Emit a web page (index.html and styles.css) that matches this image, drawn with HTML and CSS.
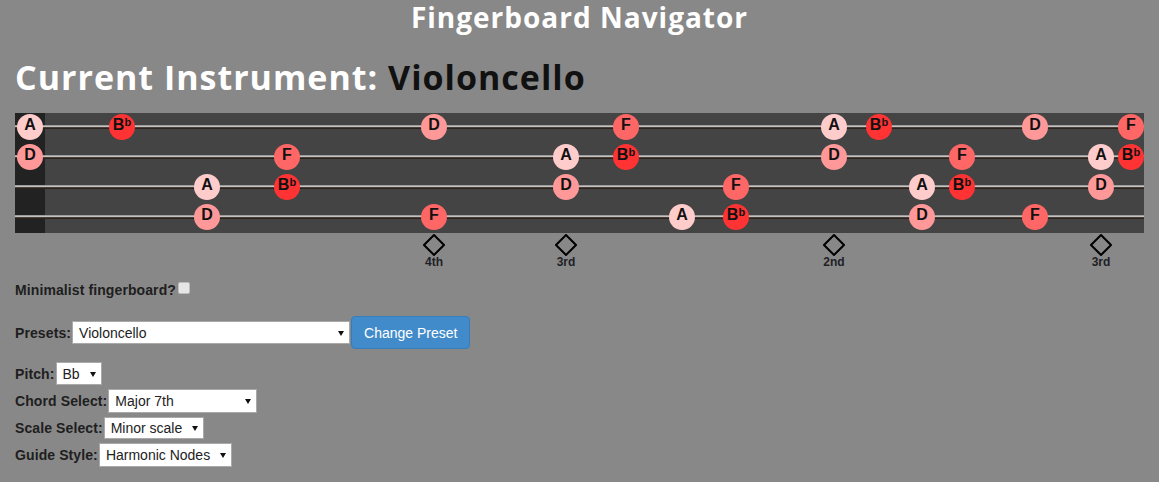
FILE: index.html
```html
<!DOCTYPE html>
<html lang="en">
<head>
<meta charset="utf-8">
<title>Fingerboard Navigator</title>
<link rel="stylesheet" href="styles.css">
</head>
<body>
<h2 class="title">Fingerboard Navigator</h2>
<div class="page">
  <h1 class="instrument">Current Instrument: <span class="inst-name">Violoncello</span></h1>

  <div class="board">
    <div class="nut"></div>
    <div class="string-row">
      <div class="string"></div>
      <span class="note n-a" style="left:2px">A</span>
      <span class="note n-bb" style="left:94px">B<span class="flat">b</span></span>
      <span class="note n-d" style="left:406px">D</span>
      <span class="note n-f" style="left:598px">F</span>
      <span class="note n-a" style="left:806px">A</span>
      <span class="note n-bb" style="left:851px">B<span class="flat">b</span></span>
      <span class="note n-d" style="left:1007px">D</span>
      <span class="note n-f" style="left:1103px">F</span>
    </div>
    <div class="string-row">
      <div class="string"></div>
      <span class="note n-d" style="left:2px">D</span>
      <span class="note n-f" style="left:259px">F</span>
      <span class="note n-a" style="left:538px">A</span>
      <span class="note n-bb" style="left:598px">B<span class="flat">b</span></span>
      <span class="note n-d" style="left:806px">D</span>
      <span class="note n-f" style="left:934px">F</span>
      <span class="note n-a" style="left:1073px">A</span>
      <span class="note n-bb" style="left:1103px">B<span class="flat">b</span></span>
    </div>
    <div class="string-row">
      <div class="string"></div>
      <span class="note n-a" style="left:179px">A</span>
      <span class="note n-bb" style="left:259px">B<span class="flat">b</span></span>
      <span class="note n-d" style="left:538px">D</span>
      <span class="note n-f" style="left:708px">F</span>
      <span class="note n-a" style="left:894px">A</span>
      <span class="note n-bb" style="left:934px">B<span class="flat">b</span></span>
      <span class="note n-d" style="left:1073px">D</span>
    </div>
    <div class="string-row">
      <div class="string"></div>
      <span class="note n-d" style="left:179px">D</span>
      <span class="note n-f" style="left:406px">F</span>
      <span class="note n-a" style="left:654px">A</span>
      <span class="note n-bb" style="left:708px">B<span class="flat">b</span></span>
      <span class="note n-d" style="left:894px">D</span>
      <span class="note n-f" style="left:1007px">F</span>
    </div>
  </div>

  <div class="markers">
    <div class="marker" style="left:399px">
      <svg class="diamond" width="22" height="22" viewBox="0 0 22 22"><polygon points="11,1 21,11 11,21 1,11" fill="none" stroke="#000" stroke-width="2"/></svg>
      <span class="marker-label">4th</span>
    </div>
    <div class="marker" style="left:531px">
      <svg class="diamond" width="22" height="22" viewBox="0 0 22 22"><polygon points="11,1 21,11 11,21 1,11" fill="none" stroke="#000" stroke-width="2"/></svg>
      <span class="marker-label">3rd</span>
    </div>
    <div class="marker" style="left:799px">
      <svg class="diamond" width="22" height="22" viewBox="0 0 22 22"><polygon points="11,1 21,11 11,21 1,11" fill="none" stroke="#000" stroke-width="2"/></svg>
      <span class="marker-label">2nd</span>
    </div>
    <div class="marker" style="left:1066px">
      <svg class="diamond" width="22" height="22" viewBox="0 0 22 22"><polygon points="11,1 21,11 11,21 1,11" fill="none" stroke="#000" stroke-width="2"/></svg>
      <span class="marker-label">3rd</span>
    </div>
  </div>

  <div class="minimal-row">
    <label class="lbl" for="minimal">Minimalist fingerboard?</label><input class="check" type="checkbox" id="minimal">
  </div>

  <div class="preset-row">
    <label class="lbl" for="preset">Presets:</label>
    <span class="sel sel-preset"><select id="preset"><option>Violoncello</option><option>Violin</option><option>Viola</option><option>Double Bass</option></select></span>
    <button class="btn" type="button">Change Preset</button>
  </div>

  <div class="controls">
    <div class="ctrl-row">
      <label class="lbl" for="pitch">Pitch:</label>
      <span class="sel sel-pitch"><select id="pitch"><option>Bb</option></select></span>
    </div>
    <div class="ctrl-row">
      <label class="lbl" for="chord">Chord Select:</label>
      <span class="sel sel-chord"><select id="chord"><option>Major 7th</option></select></span>
    </div>
    <div class="ctrl-row">
      <label class="lbl" for="scale">Scale Select:</label>
      <span class="sel sel-scale"><select id="scale"><option>Minor scale</option></select></span>
    </div>
    <div class="ctrl-row">
      <label class="lbl" for="guide">Guide Style:</label>
      <span class="sel sel-guide"><select id="guide"><option>Harmonic Nodes</option></select></span>
    </div>
  </div>
</div>
</body>
</html>
```

FILE: styles.css
```css
* { box-sizing: border-box; }

body {
  margin: 0;
  background: #888888;
  font-family: "Liberation Sans", Arial, sans-serif;
  color: #1e1e1e;
}

.title {
  margin: 0;
  padding-top: 2px;
  text-align: center;
  font-family: "Open Sans", sans-serif;
  font-weight: 700;
  font-size: 28px;
  line-height: 30px;
  letter-spacing: 1px;
  color: #ffffff;
}

.page {
  padding-left: 15px;
}

.instrument {
  margin: 25px 0 0 0;
  font-family: "Open Sans", sans-serif;
  font-weight: 700;
  font-size: 34px;
  line-height: 40px;
  letter-spacing: 1px;
  color: #ffffff;
}

.inst-name {
  color: #111111;
}

.board {
  position: relative;
  margin-top: 16px;
  width: 1129px;
  height: 120px;
  background: #444444;
  display: flex;
  flex-direction: column;
}

.nut {
  position: absolute;
  left: 0;
  top: 0;
  width: 30px;
  height: 120px;
  background: #222222;
}

.string-row {
  position: relative;
  height: 30px;
}

.string {
  position: absolute;
  left: 0;
  right: 0;
  top: 12px;
  height: 4px;
  background: linear-gradient(to bottom, #9c9c9c 0 1px, #c2c2c2 1px 2px, #4a4038 2px 3px, #2a221b 3px 4px);
}

.note {
  position: absolute;
  top: 1px;
  width: 26px;
  height: 26px;
  border-radius: 50%;
  text-align: center;
  font-weight: 700;
  font-size: 16px;
  line-height: 21px;
  color: #111111;
}

.flat {
  font-size: 11px;
  vertical-align: 4px;
  line-height: 0;
}

.n-a { background: #ffcccc; }
.n-d { background: #ff9999; }
.n-f { background: #ff6666; }
.n-bb { background: #ff3333; }

.markers {
  position: relative;
  width: 1129px;
  height: 37px;
}

.marker {
  position: absolute;
  top: 1px;
  width: 40px;
  display: flex;
  flex-direction: column;
  align-items: center;
}

.diamond {
  display: block;
}

.marker-label {
  margin-top: -1px;
  font-weight: 700;
  font-size: 12px;
  line-height: 14px;
  color: #1f1f26;
}

.lbl {
  font-weight: 700;
  font-size: 14px;
  line-height: 20px;
  letter-spacing: 0.1px;
  color: #1e1e1e;
}

.minimal-row {
  margin-top: 10px;
  height: 20px;
  display: flex;
  align-items: flex-start;
}

.check {
  appearance: none;
  -webkit-appearance: none;
  margin: 2px 0 0 2px;
  width: 12px;
  height: 12px;
  background: #e6e6e6;
  border: 1px solid #bdbdbd;
  border-radius: 2px;
}

.preset-row {
  margin-top: 16px;
  display: flex;
  align-items: center;
  height: 33px;
}

.sel {
  position: relative;
  display: inline-block;
  margin-left: 1px;
}

.sel::after {
  content: "";
  position: absolute;
  right: 6px;
  top: 50%;
  margin-top: -2px;
  border-left: 3px solid transparent;
  border-right: 3px solid transparent;
  border-top: 5px solid #111111;
  pointer-events: none;
}

.sel select {
  appearance: none;
  -webkit-appearance: none;
  display: block;
  height: 23px;
  margin: 0;
  padding: 0 18px 0 6px;
  background: #ffffff;
  border: 1px solid #a9a9a9;
  border-radius: 0;
  font-family: "Liberation Sans", Arial, sans-serif;
  font-size: 14px;
  color: #222222;
}

.sel-preset select { width: 278px; }
.sel-pitch select { width: 46px; }
.sel-chord select { width: 149px; height: 24px; }
.sel-scale select { width: 100px; height: 22px; }
.sel-guide select { width: 133px; height: 24px; }

.btn {
  margin-left: 1px;
  height: 33px;
  padding: 0 12px;
  background: #428bca;
  border: 1px solid #357ebd;
  border-radius: 4px;
  font-family: "Liberation Sans", Arial, sans-serif;
  font-size: 14px;
  color: #ffffff;
}

.controls {
  margin-top: 11px;
  display: flex;
  flex-direction: column;
}

.ctrl-row {
  height: 27px;
  display: flex;
  align-items: center;
}
```
